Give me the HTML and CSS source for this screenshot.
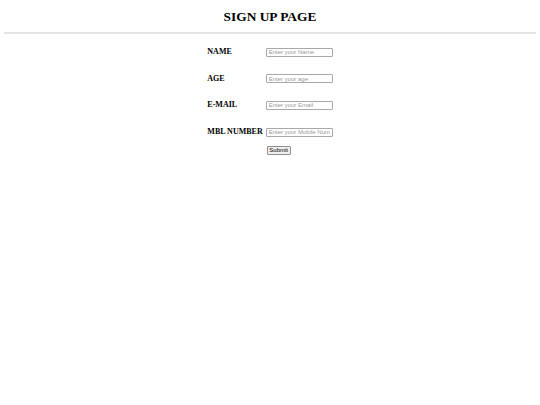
FILE: index.html
```html
<!DOCTYPE html>
<html>
<head>
<meta charset="utf-8">
<link rel="stylesheet" href="styles.css">
</head>
<body>
<h1 class="title">SIGN UP PAGE</h1>
<hr class="rule">
<form class="form">
  <label class="label" for="n">NAME</label>
  <input class="field" id="n" type="text" placeholder="Enter your Name">
  <label class="label" for="a">AGE</label>
  <input class="field" id="a" type="text" placeholder="Enter your age">
  <label class="label" for="e">E-MAIL</label>
  <input class="field" id="e" type="text" placeholder="Enter your Email">
  <label class="label" for="m">MBL NUMBER</label>
  <input class="field" id="m" type="text" placeholder="Enter your Mobile Number">
  <span class="spacer"></span>
  <div class="actions"><button class="submit" type="button">Submit</button></div>
</form>
</body>
</html>
```
FILE: styles.css
```css
html, body {
  margin: 0;
  padding: 0;
  background: #fff;
}
body {
  padding: 0 4px;
  font-family: "Liberation Serif", "Times New Roman", serif;
  color: #000;
}
.title {
  margin: 0;
  padding-top: 8px;
  height: 24px;
  line-height: 17px;
  font-size: 13.4px;
  font-weight: bold;
  text-align: center;
}
.rule {
  margin: 0;
  height: 0;
  border: none;
  border-top: 2px solid #e4e4e4;
}
.form {
  display: grid;
  grid-template-columns: auto 67px;
  grid-auto-rows: 26.6px;
  column-gap: 3px;
  justify-content: center;
  align-items: center;
  margin-top: 5px;
}
.label {
  font-size: 8px;
  font-weight: bold;
  line-height: 10px;
  white-space: nowrap;
}
.field {
  box-sizing: border-box;
  width: 67px;
  height: 9px;
  margin: 0;
  padding: 0 2px;
  border: 1px solid #a8a8a8;
  border-radius: 1px;
  font-family: "Liberation Sans", Arial, sans-serif;
  font-size: 6px;
  color: #000;
  outline: none;
}
.field::placeholder {
  color: #999;
}
.spacer {
  display: block;
}
.actions {
  display: flex;
  padding-left: 1px;
  align-self: start;
  margin-top: 1px;
}
.submit {
  box-sizing: border-box;
  width: 24px;
  height: 9px;
  margin: 0;
  padding: 0;
  border: 1px solid #8f8f8f;
  border-radius: 1px;
  background: #efefef;
  font-family: "Liberation Sans", Arial, sans-serif;
  font-size: 6px;
  line-height: 7px;
  color: #000;
}
```
